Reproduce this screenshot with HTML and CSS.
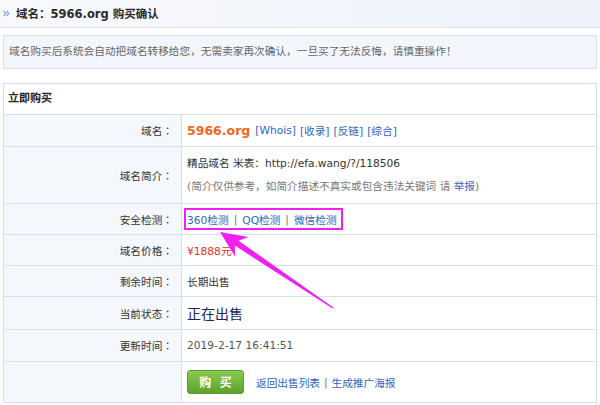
FILE: index.html
```html
<!DOCTYPE html>
<html lang="zh-CN">
<head>
<meta charset="utf-8">
<title>域名购买确认</title>
<link rel="stylesheet" href="styles.css">
</head>
<body>
<div class="page">
  <div class="head">
    <svg class="head-icon" width="7" height="7" viewBox="0 0 7 7"><path d="M0.6 1 L2.8 3.5 L0.6 6 M3.6 1 L5.8 3.5 L3.6 6" fill="none" stroke="#7aa6dc" stroke-width="1.2"/></svg>
    <h1 class="head-title">域名<span class="colon">：</span>5966.org 购买确认</h1>
  </div>

  <div class="notice">域名购买后系统会自动把域名转移给您，无需卖家再次确认，一旦买了无法反悔，请慎重操作！</div>

  <div class="panel">
    <div class="panel-title">立即购买</div>

    <div class="row row-domain">
      <div class="k">域名<span class="colon">：</span></div>
      <div class="v"><span class="dom">5966.org</span><a class="lnk">[Whois]</a><a class="lnk">[收录]</a><a class="lnk">[反链]</a><a class="lnk">[综合]</a></div>
    </div>

    <div class="row row-intro">
      <div class="k">域名简介<span class="colon">：</span></div>
      <div class="v v-col">
        <div class="intro">精品域名 米表<span class="colon">：</span>http://efa.wang/?/118506</div>
        <div class="note">(简介仅供参考，如简介描述不真实或包含违法关键词 请 <a class="lnk-plain">举报</a>)</div>
      </div>
    </div>

    <div class="row row-std">
      <div class="k">安全检测<span class="colon">：</span></div>
      <div class="v"><span class="mark"><a class="lnk-plain">360检测</a><span class="sep">|</span><a class="lnk-plain">QQ检测</a><span class="sep">|</span><a class="lnk-plain">微信检测</a></span></div>
    </div>

    <div class="row row-std">
      <div class="k">域名价格<span class="colon">：</span></div>
      <div class="v"><span class="price">¥1888元</span></div>
    </div>

    <div class="row row-std">
      <div class="k">剩余时间<span class="colon">：</span></div>
      <div class="v">长期出售</div>
    </div>

    <div class="row row-status">
      <div class="k">当前状态<span class="colon">：</span></div>
      <div class="v"><span class="status">正在出售</span></div>
    </div>

    <div class="row row-time">
      <div class="k">更新时间<span class="colon">：</span></div>
      <div class="v"><span class="time">2019-2-17 16:41:51</span></div>
    </div>

    <div class="row row-buy">
      <div class="k"></div>
      <div class="v"><button class="buy" type="button">购 买</button><a class="lnk-plain">返回出售列表</a><span class="sep">|</span><a class="lnk-plain">生成推广海报</a></div>
    </div>
  </div>
</div>

<svg class="arrow" width="600" height="405" viewBox="0 0 600 405">
  <polygon points="220,232 248.5,237 238.5,240.7 333.4,307.4 332.6,308.6 234.9,245.6 235,256.5" fill="#f020f0"/>
</svg>
</body>
</html>
```

FILE: styles.css
```css
* { box-sizing: border-box; }

html, body {
  margin: 0;
  padding: 0;
  background: #ffffff;
}

body {
  font-family: "DejaVu Sans", "Noto Sans CJK SC", sans-serif;
  font-size: 10.67px;
  color: #333333;
  width: 600px;
  height: 405px;
  overflow: hidden;
  position: relative;
}

.colon {
  font-family: "Noto Sans CJK JP", "Noto Sans CJK SC", sans-serif;
}

.head {
  height: 28px;
  display: flex;
  align-items: center;
  padding-left: 3px;
  border-bottom: 1px solid #dfe4ea;
  background: linear-gradient(to right, #f8f9fc, #edf2fb);
}

.head-icon {
  display: block;
  margin-right: 6px;
}

.head-title {
  margin: 0;
  font-size: 11.5px;
  font-weight: bold;
  color: #2a2a2a;
  line-height: 20px;
}

.notice {
  margin: 7px 3px 0 3px;
  height: 34px;
  line-height: 32px;
  padding: 0 5px;
  border: 1px solid #d3e2f3;
  background: #f3f6fc;
  color: #666666;
}

.panel {
  margin: 14px 3px 0 3px;
  border: 1px solid #cfdff2;
}

.panel-title {
  height: 31px;
  line-height: 30px;
  padding-left: 4px;
  border-bottom: 1px solid #d3e2f3;
  font-weight: bold;
  font-size: 11px;
  color: #222222;
}

.row {
  display: grid;
  grid-template-columns: 178px 1fr;
  border-bottom: 1px solid #d3e2f3;
}

.row:last-child { border-bottom: 0; }

.row-domain { height: 32px; }
.row-intro { height: 57px; }
.row-std { height: 31px; }
.row-status { height: 33px; }
.row-time { height: 32px; }
.row-buy { height: 40px; }

.k {
  background: #f4f7fc;
  border-right: 1px solid #d3e2f3;
  display: flex;
  align-items: center;
  justify-content: flex-end;
  padding-right: 8px;
  color: #333333;
}

.v {
  display: flex;
  align-items: center;
  padding-left: 5px;
  white-space: nowrap;
}

.v-col {
  flex-direction: column;
  align-items: flex-start;
  justify-content: center;
}

.dom {
  color: #f5661c;
  font-weight: bold;
  font-size: 12.5px;
  margin-right: 5px;
}

.lnk {
  color: #2f66c4;
  margin-right: 4px;
}

.lnk-plain {
  color: #2f66c4;
}

.intro {
  line-height: 22px;
  color: #333333;
}

.note {
  line-height: 22px;
  margin-top: 1px;
  color: #777777;
}

.mark {
  display: inline-flex;
  align-items: center;
  height: 22px;
  margin-left: -3px;
  padding: 0 4px 0 1px;
  border: 2px solid #f020f0;
}

.sep {
  color: #777777;
  margin: 0 4px;
}

.mark .sep {
  margin: 0 5px;
}

.price {
  color: #e3312f;
}

.status {
  font-family: "Noto Sans CJK SC", sans-serif;
  font-size: 14px;
  color: #22235f;
}

.time {
  color: #555555;
}

.buy {
  width: 57px;
  height: 24px;
  margin: 0 12px 0 0;
  padding: 0 0 0 3px;
  border: 1px solid #5d9a2f;
  border-radius: 3px;
  background: linear-gradient(#8acb52, #5da22b);
  color: #ffffff;
  font-family: "Noto Sans CJK SC", sans-serif;
  font-size: 12px;
  font-weight: bold;
  letter-spacing: 3px;
  line-height: 22px;
}

.arrow {
  position: absolute;
  left: 0;
  top: 0;
  pointer-events: none;
}
```
